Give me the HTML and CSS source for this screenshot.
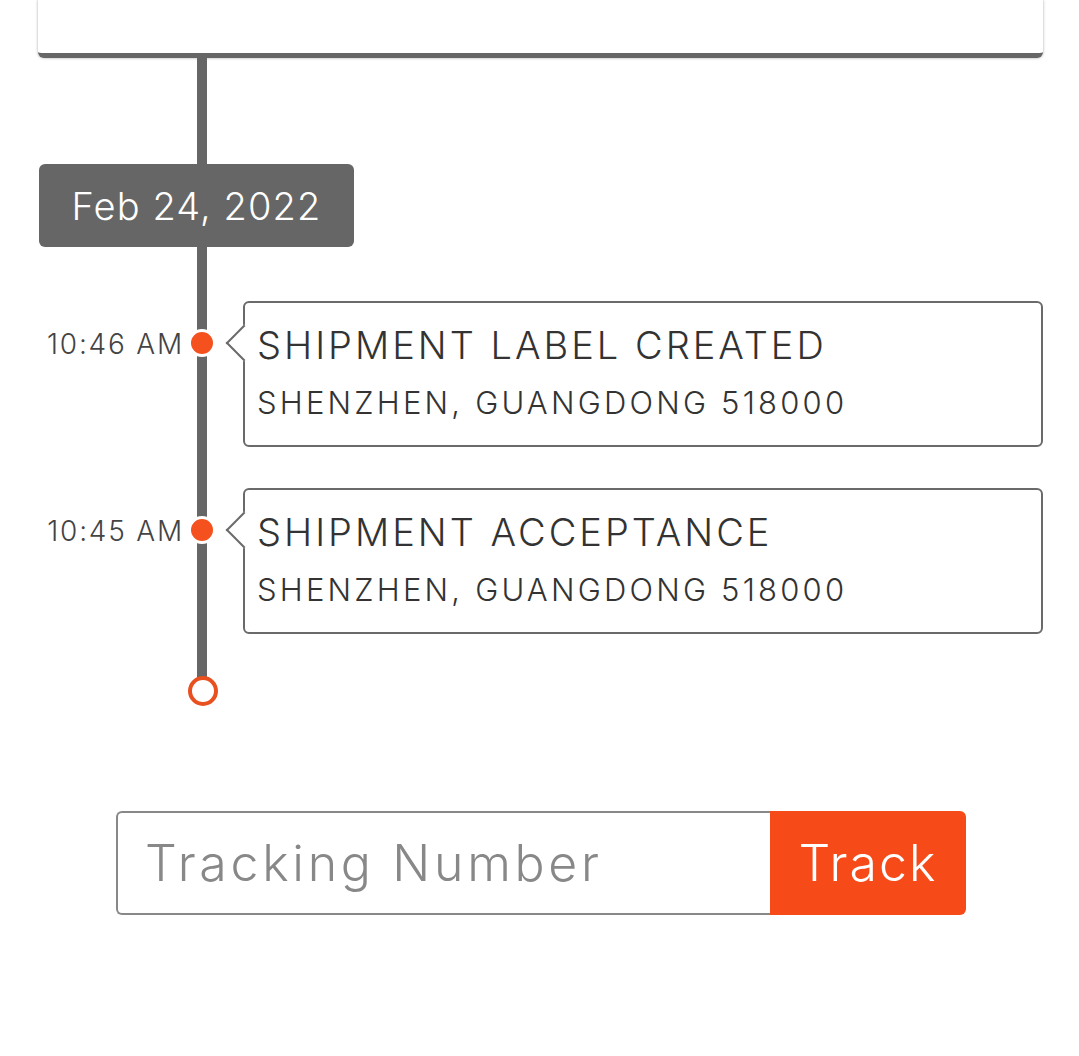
FILE: index.html
```html
<!DOCTYPE html>
<html>
<head>
<meta charset="utf-8">
<link rel="stylesheet" href="styles.css">
</head>
<body>
<div class="page">
  <div class="top-card"></div>
  <div class="timeline">
    <div class="date-badge">Feb 24, 2022</div>
    <div class="event">
      <div class="time">10:46 AM</div>
      <div class="dot-col"><span class="dot"></span></div>
      <div class="card">
        <div class="title">SHIPMENT LABEL CREATED</div>
        <div class="place">SHENZHEN, GUANGDONG 518000</div>
      </div>
    </div>
    <div class="event">
      <div class="time">10:45 AM</div>
      <div class="dot-col"><span class="dot"></span></div>
      <div class="card">
        <div class="title">SHIPMENT ACCEPTANCE</div>
        <div class="place">SHENZHEN, GUANGDONG 518000</div>
      </div>
    </div>
    <div class="end-row"><span class="end-circle"></span></div>
  </div>
  <form class="track-form">
    <input class="track-input" type="text" placeholder="Tracking Number">
    <button class="track-btn" type="button">Track</button>
  </form>
</div>
</body>
</html>
```
FILE: styles.css
```css
* { box-sizing: border-box; }
body {
  margin: 0;
  background: #fff;
  font-family: "Inter", "Noto Sans", sans-serif;
  font-weight: 300;
  color: #444;
}
.page {
  width: 1079px;
  padding: 0 36px 0 38px;
}
.top-card {
  height: 58px;
  background: #fff;
  border-bottom: 5px solid #666;
  border-radius: 0 0 6px 6px;
  box-shadow: 0 0 3px rgba(0,0,0,0.35);
}
.timeline {
  position: relative;
  padding-top: 106px;
}
.timeline::before {
  content: "";
  position: absolute;
  left: 159px;
  top: 0;
  width: 10px;
  height: 622px;
  background: #666;
}
.date-badge {
  position: relative;
  width: 315px;
  height: 83px;
  margin-left: 1px;
  background: #666;
  border-radius: 6px;
  color: #fff;
  font-size: 38px;
  display: flex;
  align-items: center;
  justify-content: center;
  letter-spacing: 1.1px;
}
.event {
  position: relative;
  display: grid;
  grid-template-columns: 144px 40px 1fr;
  margin-top: 54px;
}
.event + .event { margin-top: 41px; }
.time {
  font-size: 28px;
  text-align: right;
  padding-top: 26px;
  color: #444;
  letter-spacing: 1.8px;
  margin-right: -2px;
}
.dot-col {
  display: flex;
  justify-content: center;
  padding-top: 28px;
}
.dot {
  width: 28px;
  height: 28px;
  border-radius: 50%;
  background: #f4511e;
  border: 3px solid #fff;
}
.card {
  position: relative;
  margin-left: 21px;
  height: 146px;
  border: 2px solid #6a6a6a;
  border-radius: 6px;
  background: #fff;
  padding: 19px 0 0 12px;
}
.card::before {
  content: "";
  position: absolute;
  left: -14px;
  top: 27px;
  width: 24px;
  height: 24px;
  background: #fff;
  border-left: 2px solid #6a6a6a;
  border-bottom: 2px solid #6a6a6a;
  transform: rotate(45deg);
}
.title {
  position: relative;
  font-size: 38px;
  line-height: 46px;
  color: #333;
  letter-spacing: 3px;
}
.place {
  position: relative;
  font-size: 31px;
  line-height: 40px;
  margin-top: 15px;
  color: #333;
  letter-spacing: 3.2px;
}
.end-row {
  position: relative;
  margin-top: 42px;
  padding-left: 150px;
  height: 28px;
}
.end-circle {
  display: block;
  width: 30px;
  height: 30px;
  border-radius: 50%;
  border: 4px solid #e8501f;
  background: #fff;
}
.track-form {
  display: flex;
  width: 850px;
  height: 104px;
  margin: 107px 0 0 78px;
}
.track-input {
  flex: 1 1 0;
  min-width: 0;
  width: 0;
  height: 100%;
  border: 2px solid #888;
  border-right: none;
  border-radius: 6px 0 0 6px;
  padding: 0 0 0 27px;
  font-family: inherit;
  font-weight: 300;
  font-size: 50px;
  letter-spacing: 3.7px;
  color: #444;
  outline: none;
}
.track-input::placeholder { color: #888; }
.track-btn {
  flex: 0 0 196px;
  width: 196px;
  height: 100%;
  border: none;
  border-radius: 0 6px 6px 0;
  background: #f74a19;
  color: #fff;
  font-family: inherit;
  font-weight: 300;
  font-size: 50px;
  letter-spacing: 2px;
  padding: 0;
}
```
